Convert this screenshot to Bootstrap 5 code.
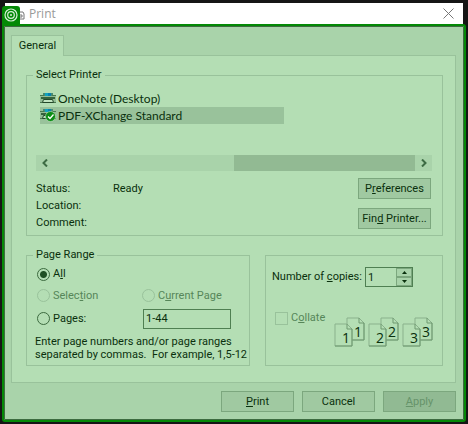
<!DOCTYPE html>
<html lang="en">
<head>
<meta charset="utf-8">
<meta name="viewport" content="width=device-width, initial-scale=1">
<title>Print</title>
<link href="https://cdn.jsdelivr.net/npm/bootstrap@5.3.0/dist/css/bootstrap.min.css" rel="stylesheet">
<style>
:root{--ink:#0a300d;--pane:#b4deb4;--face:#a9d3aa;--rule:#99c29b;--accent:#048906;--dim:#568659}
body{background:#151515;font-family:Roboto,"Liberation Sans",sans-serif;font-size:11px;line-height:14px;color:var(--ink);padding:3px 2px 2px}
.dialog{min-height:calc(100vh - 5px);position:relative}
.titlebar{height:21px;margin:0 3px;background:#fff;padding-left:24px;font-family:"Open Sans",sans-serif;font-size:12px;color:#999}
.close-btn{width:30px;height:21px}
.app-badge{position:absolute;left:0;top:3px;width:18px;height:20px;background:var(--accent);border-radius:3px 3px 0 0}
.app-icon{position:absolute;left:18px;top:8px}
.sheet{border:2px solid var(--accent);border-radius:3px;background:var(--face);box-shadow:inset 0 0 0 1px #3d6b40;padding:9px 8px 8px 7px}
.tab-btn{height:21px;width:53px;border:1px solid var(--rule)!important;border-bottom:0!important;border-radius:0!important;padding:0!important;margin-bottom:-1px;background:var(--pane)!important;color:var(--ink)!important;font-size:11px;line-height:18px;position:relative}
.pane{background:var(--pane);border:1px solid var(--rule);padding:12px 12px 14px 14px}
fieldset.group{border:1px solid var(--rule)}
.group legend{float:none;width:auto;font-size:11px;line-height:14px;margin:0 0 0 6px;padding:0 3px}
.printers{margin:8px 158px 0 13px}
.printer{height:17px;border:0;background:none;color:var(--ink);font-family:Lato,sans-serif;font-size:12px;line-height:17px;padding:0;gap:2px;white-space:nowrap}
.printer.chosen{background:#99c29b}
.scroller{height:16px;background:var(--face);margin:31px 10px 0 9px}
.scroller button{width:17px;height:16px;border:0;padding:0;background:none;display:flex;align-items:center;justify-content:center}
.thumb{flex:0 0 50%;background:#92ba93}
.details{padding:7px 11px 4px 9px}
.details dl{line-height:17px;grid-template-columns:77px 1fr;margin-top:2px}
.pushes{gap:9px}
.push{width:73px;height:21px;border:1px solid #7ca77e!important;border-radius:0!important;background:#a0c9a1!important;color:var(--ink)!important;padding:0!important;font-size:11px;line-height:18px}
.push:disabled{background:#91ba93!important;color:#66936a!important;opacity:1}
.lower{grid-template-columns:224fr 178fr;gap:15px;margin-top:12px}
.range{padding-bottom:4px}
.choices{padding:2px 18px 0 10px;grid-template-columns:105px 1fr;grid-template-rows:20px 23px 23px;align-items:center}
.choice{display:flex;align-items:center;gap:3px;white-space:nowrap}
.choice input{appearance:none;width:13px;height:13px;border:1px solid #3c6a3f;border-radius:50%;margin:0;background:transparent}
.choice input:checked{background:radial-gradient(circle,#205024 0 3px,transparent 4px)}
.choice input[type=checkbox]{border-radius:0}
.choice input:disabled{border-color:var(--rule)}
.off{color:var(--dim)}
.field{border:1px solid #4f7f52;border-radius:0;background:transparent;color:var(--ink);font-size:11px;line-height:14px;padding:0 2px;height:20px;min-width:0}
.choices .field{margin-left:1px}
.help{line-height:13px;margin:5px 0 0 8px;white-space:pre}
.copies{margin-top:7px;padding:11px 9px 0 6px}
.spin{width:48px;height:20px;border:1px solid #4f7f52}
.spin .field{width:29px;border:0;height:18px;flex:1}
.spin button{height:9px;width:16px;border:1px solid #7ca77e;padding:0;background:var(--face);display:flex;align-items:center;justify-content:center}
.collate{margin-top:24px;padding-left:3px}
.sheets{padding-top:30px;gap:3px}
.sheets text{font-family:"Open Sans",sans-serif;font-size:14px;fill:var(--ink)}
.actions{gap:8px;padding-top:8px}
</style>
<script src="https://cdn.jsdelivr.net/npm/bootstrap@5.3.0/dist/js/bootstrap.bundle.min.js"></script>
</head>
<body>
<svg width="0" height="0" class="position-absolute" aria-hidden="true"><defs>
<symbol id="printer" viewBox="0 0 16 12"><path d="M3 0h10v4H3z" fill="#488b71"/><path d="M5 0h3v3H5z" fill="#12a2bd"/><path d="M8 0h3v3H8z" fill="#087fae"/><path d="M0 2h4v1H0zM12 2h4v1h-4zM0 9h3v1H0zM13 9h3v1h-3z" fill="#4a7a50"/><path d="M0 3h16v6H0z" fill="#93bd95"/><path d="M1 4h14v2H1z" fill="#35633c"/><path d="M3.500 6.500h9l1 3h-11z" fill="#c0e4c0" stroke="#24482a"/></symbol>
<symbol id="pages" viewBox="0 0 31 30"><path d="M13 1h12l5 5v17H13z" fill="#b4deb4" stroke="#8ab18c"/><path d="M25 1v5h5" fill="none" stroke="#6e9970"/><path d="M30 6v17H18" fill="none" stroke="#6e9970"/><path d="M1 7h12l5 5v17H1z" fill="#b4deb4" stroke="#8ab18c"/><path d="M13 7v5h5v17H1" fill="none" stroke="#6e9970"/></symbol>
</defs></svg>
<main class="dialog d-flex flex-column">
  <header class="titlebar d-flex align-items-center justify-content-between">
    <span>Print</span>
    <button class="close-btn btn p-0 border-0 d-flex align-items-center justify-content-center" aria-label="Close"><svg width="11" height="11" viewBox="0 0 11 11"><path d="M.5.5l10 10M10.5.5l-10 10" stroke="#777"/></svg></button>
  </header>
  <svg class="app-icon" width="5" height="9" viewBox="0 0 5 9"><path d="M0 1h3l1 2v5H0M0 4h2v2H0" fill="none" stroke="#777"/></svg>
  <span class="app-badge"><svg class="d-block" width="18" height="18" viewBox="0 0 18 18" fill="none" stroke="#d7f0d7"><circle cx="9" cy="9" r="6" stroke-width="1.2"/><circle cx="9" cy="9" r="3.3" stroke-width="1.2"/><circle cx="9" cy="9" r="1" fill="#d7f0d7" stroke="none"/></svg></span>
  <section class="sheet flex-grow-1 d-flex flex-column">
    <div class="nav" role="tablist"><button class="tab-btn nav-link active" role="tab" aria-selected="true">General</button></div>
    <form class="pane flex-grow-1" onsubmit="return false">
      <fieldset class="group">
        <legend>Select Printer</legend>
        <div class="printers" role="listbox" aria-label="Printers">
          <button type="button" role="option" class="printer d-flex w-100 align-items-center"><svg width="16" height="12"><use href="#printer"/></svg>OneNote (Desktop)</button>
          <button type="button" role="option" aria-selected="true" class="printer chosen d-flex w-100 align-items-center"><svg width="16" height="13" viewBox="0 0 16 13"><use href="#printer" width="16" height="12"/><circle cx="10.500" cy="7.500" r="5" fill="#0c8d15" stroke="#c2e5c2" stroke-width=".6"/><path d="M8 7.500l2 2 3.500-4" fill="none" stroke="#fff" stroke-width="1.300"/></svg>PDF-XChange Standard</button>
        </div>
        <div class="scroller d-flex justify-content-between">
          <button type="button" aria-label="Scroll left"><svg width="8" height="8" viewBox="0 0 8 8"><path d="M6 .5L2.500 4 6 7.500" fill="none" stroke="#3c6b43" stroke-width="2"/></svg></button>
          <div class="d-flex flex-grow-1 justify-content-end"><span class="thumb"></span></div>
          <button type="button" aria-label="Scroll right"><svg width="8" height="8" viewBox="0 0 8 8"><path d="M2 .5L5.500 4 2 7.500" fill="none" stroke="#3c6b43" stroke-width="2"/></svg></button>
        </div>
        <div class="details d-flex justify-content-between align-items-start">
          <dl class="d-grid mb-0"><dt class="fw-normal">Status:</dt><dd class="m-0">Ready</dd><dt class="fw-normal">Location:</dt><dd class="m-0"></dd><dt class="fw-normal">Comment:</dt><dd class="m-0"></dd></dl>
          <div class="pushes d-grid"><button type="button" class="push btn">P<u>r</u>eferences</button><button type="button" class="push btn">Fin<u>d</u> Printer...</button></div>
        </div>
      </fieldset>
      <div class="lower d-grid">
        <fieldset class="group range">
          <legend>Page Range</legend>
          <div class="choices d-grid">
            <label class="choice"><input type="radio" name="range" checked><span>A<u>l</u>l</span></label><span></span>
            <label class="choice off"><input type="radio" name="range" disabled><span>Selec<u>t</u>ion</span></label>
            <label class="choice off"><input type="radio" name="range" disabled><span>C<u>u</u>rrent Page</span></label>
            <label class="choice"><input type="radio" name="range"><span>Pa<u>g</u>es:</span></label>
            <input class="field" type="text" value="1-44" aria-label="Page numbers">
          </div>
          <p class="help">Enter page numbers and/or page ranges
separated by commas.&nbsp; For example, 1,5-12</p>
        </fieldset>
        <fieldset class="group copies" aria-label="Copies">
          <div class="d-flex align-items-center justify-content-between pe-3 me-1">
            <label for="copies" class="text-nowrap">Number of <u>c</u>opies:</label>
            <div class="spin d-flex"><input class="field" id="copies" type="text" value="1"><div><button type="button" aria-label="More"><svg width="5" height="3"><path d="M0 3L2.500 0 5 3z" fill="#0a300d"/></svg></button><button type="button" aria-label="Fewer"><svg width="5" height="3"><path d="M0 0L2.500 3 5 0z" fill="#0a300d"/></svg></button></div></div>
          </div>
          <div class="d-flex justify-content-between">
            <div class="collate"><label class="choice off"><input type="checkbox" disabled><span>C<u>o</u>llate</span></label></div>
            <div class="sheets d-flex" role="img" aria-label="Uncollated copies: 1 1, 2 2, 3 3">
              <svg width="31" height="30" viewBox="0 0 31 30"><use href="#pages"/><text x="20" y="20">1</text><text x="8" y="26">1</text></svg>
              <svg width="31" height="30" viewBox="0 0 31 30"><use href="#pages"/><text x="20" y="20">2</text><text x="8" y="26">2</text></svg>
              <svg width="31" height="30" viewBox="0 0 31 30"><use href="#pages"/><text x="20" y="20">3</text><text x="8" y="26">3</text></svg>
            </div>
          </div>
        </fieldset>
      </div>
    </form>
    <footer class="actions d-flex justify-content-end"><button class="push btn"><u>P</u>rint</button><button class="push btn">Cancel</button><button class="push btn" disabled><u>A</u>pply</button></footer>
  </section>
</main>
</body>
</html>
